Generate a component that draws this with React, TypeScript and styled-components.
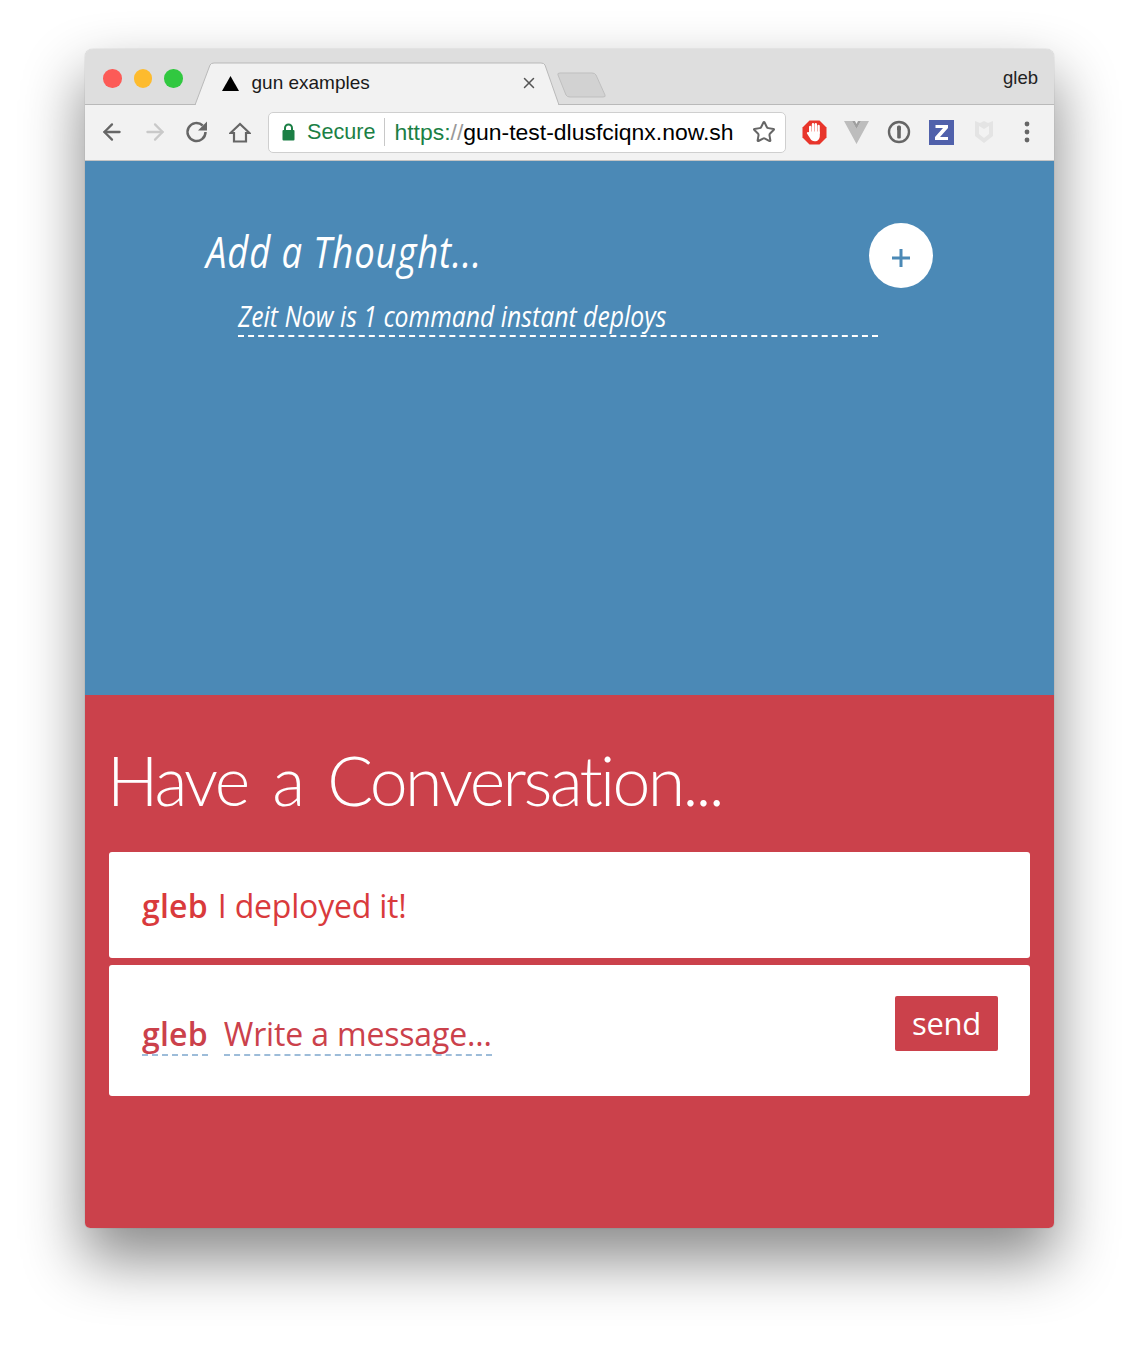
import { ArrowLeft, ArrowRight, Star, X } from "lucide-react"
import styled, { createGlobalStyle } from "styled-components"

const GlobalStyle = createGlobalStyle`
    html, body {
        margin: 0;
        padding: 0;
        background: #fff;
    }
`

const Page = styled.div`
    width: 1139px;
    height: 1350px;
    padding-top: 49px;
    box-sizing: border-box;
    overflow: hidden;
`

const BrowserWindow = styled.div`
    width: 969px;
    height: 1179px;
    margin-left: 85px;
    border-radius: 8px 8px 5px 5px;
    overflow: hidden;
    display: flex;
    flex-direction: column;
    box-shadow: 0 30px 60px 2px rgba(0, 0, 0, 0.46), 0 0 1px rgba(0, 0, 0, 0.4);
`

const TitleBar = styled.div`
    height: 56px;
    flex-shrink: 0;
    display: flex;
    align-items: flex-end;
    background: #dedede;
    border-bottom: 1px solid #b9b9b9;
    box-sizing: border-box;
    padding-left: 18px;
    font-family: "Liberation Sans", Arial, sans-serif;
`

const Lights = styled.div`
    display: flex;
    gap: 12px;
    align-self: flex-start;
    margin-top: 20px;
    margin-right: 11px;
`

const Light = styled.span<{ $color: string }>`
    width: 18.5px;
    height: 18.5px;
    border-radius: 50%;
    background: ${p => p.$color};
`

const Tab = styled.div`
    position: relative;
    width: 366px;
    height: 43px;
    margin-bottom: -1px;
    display: flex;
    align-items: center;
    padding: 0 22px 1px 28px;
    box-sizing: border-box;
    font-size: 19px;
    color: #1a1a1a;
`

const TabShape = styled.svg`
    position: absolute;
    left: 0;
    top: 0;
`

const TabFavicon = styled.svg`
    position: relative;
    margin-right: 13px;
`

const TabTitle = styled.span`
    position: relative;
    flex: 1;
`

const TabClose = styled(X)`
    position: relative;
    color: #555;
`

const NewTab = styled.svg`
    margin-left: -3px;
    margin-bottom: 5px;
`

const Profile = styled.span`
    margin-left: auto;
    margin-right: 16px;
    align-self: center;
    font-size: 18.5px;
    color: #222;
    padding-top: 2px;
`

const Toolbar = styled.div`
    height: 56px;
    flex-shrink: 0;
    display: flex;
    align-items: center;
    background: #f2f2f2;
    border-bottom: 1px solid #c4c4c4;
    box-sizing: border-box;
    padding: 0 0 1px 6px;
`

const ToolButton = styled.span<{ $color?: string }>`
    width: 42.5px;
    height: 40px;
    flex-shrink: 0;
    display: flex;
    align-items: center;
    justify-content: center;
    color: ${p => p.$color || "#666"};
`

const Omnibox = styled.div`
    width: 518px;
    height: 41px;
    margin-left: 7px;
    margin-right: 7px;
    display: flex;
    align-items: center;
    box-sizing: border-box;
    padding: 0 9px 0 13px;
    background: #fff;
    border: 1px solid #cfcfcf;
    border-radius: 5px;
    font-family: "Liberation Sans", Arial, sans-serif;
`

const Secure = styled.span`
    color: #1b7f45;
    font-size: 21.6px;
    margin-left: 12px;
    padding-right: 9px;
    border-right: 1px solid #c8c8c8;
    line-height: 28px;
`

const Url = styled.span`
    margin-left: 9px;
    flex: 1;
    color: #000;
    font-size: 22.95px;
    white-space: nowrap;
`

const UrlScheme = styled.span`
    color: #1b7f45;
`

const UrlSlashes = styled.span`
    color: #999;
`

const ThoughtPanel = styled.section`
    height: 534px;
    flex-shrink: 0;
    box-sizing: border-box;
    background: #4b89b6;
    padding: 62px 121px 0;
    color: #fff;
`

const ThoughtHeader = styled.div`
    display: flex;
    justify-content: space-between;
    align-items: flex-start;
`

const ThoughtTitle = styled.h2`
    margin: -1px 0 0;
    font-family: "Open Sans", sans-serif;
    font-style: italic;
    font-weight: 400;
    font-size: 44px;
    line-height: 58px;
    letter-spacing: 1px;
    transform: scaleX(0.83);
    transform-origin: left center;
    white-space: nowrap;
`

const AddButton = styled.button`
    width: 64px;
    height: 65px;
    padding: 0;
    border: 0;
    border-radius: 50%;
    background: #fff;
    color: #4b89b6;
    display: flex;
    align-items: center;
    justify-content: center;
    padding-top: 5px;
`

const ThoughtInput = styled.div`
    width: 640px;
    height: 50px;
    margin-top: -1px;
    margin-left: 32px;
    box-sizing: border-box;
    border-bottom: 2px dashed #fff;
    font-family: "Open Sans", sans-serif;
    font-style: italic;
    font-size: 30px;
    font-weight: 400;
    line-height: 58px;
`

const InputText = styled.span`
    display: inline-block;
    transform: scaleX(0.826);
    transform-origin: left center;
    white-space: nowrap;
`

const ChatPanel = styled.section`
    flex: 1;
    box-sizing: border-box;
    background: #cb414b;
    padding: 0 24px;
    display: flex;
    flex-direction: column;
    gap: 7px;
`

const ChatTitle = styled.h1`
    margin: 37px 0 0 -2px;
    height: 113px;
    font-family: Lato, sans-serif;
    font-weight: 300;
    font-size: 68px;
    line-height: 95px;
    color: #fff;
    letter-spacing: -2.7px;
    word-spacing: 9px;
    white-space: nowrap;
`

const Card = styled.div<{ $height: number }>`
    height: ${p => p.$height}px;
    box-sizing: border-box;
    background: #fff;
    border-radius: 3px;
    display: flex;
    padding: 0 32px 0 33px;
    font-family: "Open Sans", sans-serif;
    font-size: 32px;
    color: #d93a3c;
`

const MessageLine = styled.div`
    margin-top: 31px;
    line-height: 46px;
    display: flex;
    gap: 10px;
    letter-spacing: -0.2px;
`

const Author = styled.strong`
    font-weight: 600;
    letter-spacing: 0.2px;
`

const ComposeField = styled.div<{ $gap?: boolean }>`
    align-self: flex-start;
    margin-top: 47px;
    margin-right: ${p => (p.$gap ? 16 : 0)}px;
    height: 42px;
    line-height: 44px;
    border-bottom: 2px dashed #9dbcd9;
    color: #cb414b;
    font-weight: ${p => (p.$gap ? 600 : 400)};
    letter-spacing: ${p => (p.$gap ? 0.2 : -0.17)}px;
    white-space: nowrap;
`

const SendButton = styled.button`
    margin-left: auto;
    margin-top: 31px;
    width: 103px;
    height: 55px;
    border: 0;
    border-radius: 2px;
    background: #cb414b;
    color: #fff;
    font-family: "Open Sans", sans-serif;
    font-size: 31px;
    letter-spacing: -0.3px;
    padding: 0 0 1px;
`

const ExtensionIcon = styled.svg`
    display: block;
`

export default function App() {
    return (
        <Page>
            <GlobalStyle />
            <BrowserWindow>
                <TitleBar>
                    <Lights>
                        <Light $color="#fc5b57" />
                        <Light $color="#fdbb2e" />
                        <Light $color="#31c840" />
                    </Lights>
                    <Tab>
                        <TabShape width="366" height="43" viewBox="0 0 366 43">
                            <path d="M1 43 L16 3 Q17 1 20 1 L347 1 Q350 1 351 3 L365 43 Z" fill="#f2f2f2" stroke="#b9b9b9" strokeWidth="1" />
                            <rect x="2" y="42" width="362" height="2" fill="#f2f2f2" />
                        </TabShape>
                        <TabFavicon width="17" height="15" viewBox="0 0 17 15">
                            <path d="M8.5 0 L17 15 L0 15 Z" fill="#000" />
                        </TabFavicon>
                        <TabTitle>gun examples</TabTitle>
                        <TabClose size={18} strokeWidth={2} />
                    </Tab>
                    <NewTab width="52" height="28" viewBox="0 0 52 28">
                        <path d="M3 2 L35 2 Q38 2 39 4 L48 24 Q49 26 46 26 L13 26 Q10 26 9 24 L1 4 Q0 2 3 2 Z" fill="#d2d2d2" stroke="#bfbfbf" />
                    </NewTab>
                    <Profile>gleb</Profile>
                </TitleBar>
                <Toolbar>
                    <ToolButton><ArrowLeft size={26} strokeWidth={2.1} /></ToolButton>
                    <ToolButton $color="#c9c9c9"><ArrowRight size={26} strokeWidth={2.1} /></ToolButton>
                    <ToolButton>
                        <ExtensionIcon width="24" height="24" viewBox="0 0 24 24">
                            <path d="M20.5 12a9 9 0 1 1-2.8-6.5" fill="none" stroke="#666" strokeWidth="2.5" />
                            <path d="M22 1.5V10.5H13Z" fill="#666" />
                        </ExtensionIcon>
                    </ToolButton>
                    <ToolButton>
                        <ExtensionIcon width="22" height="21" viewBox="0 0 22 21">
                            <path d="M11 2L1.5 11H5V19.5H17V11H20.5Z" fill="none" stroke="#666" strokeWidth="2.2" strokeLinejoin="miter" />
                        </ExtensionIcon>
                    </ToolButton>
                    <Omnibox>
                        <svg width="13" height="18" viewBox="0 0 13 18">
                            <path d="M3 8V5a3.5 3.5 0 0 1 7 0v3" fill="none" stroke="#1b7f45" strokeWidth="2" />
                            <rect x="0.5" y="7" width="12" height="10.5" rx="1" fill="#1b7f45" />
                        </svg>
                        <Secure>Secure</Secure>
                        <Url>
                            <UrlScheme>https:</UrlScheme>
                            <UrlSlashes>//</UrlSlashes>
                            gun-test-dlusfciqnx.now.sh
                        </Url>
                        <Star size={24} strokeWidth={2} color="#666" />
                    </Omnibox>
                    <ToolButton>
                        <ExtensionIcon width="25" height="25" viewBox="0 0 25 25">
                            <path d="M7.5 0.5H17.5L24.5 7.5V17.5L17.5 24.5H7.5L0.5 17.5V7.5Z" fill="#e8352b" />
                            <path d="M8.2 13V7M11 12V4.2M13.8 12V4.2M16.6 13V6" stroke="#fff" strokeWidth="2.4" strokeLinecap="round" />
                            <path d="M7 11.5H17.8V16c0 3-2 5.3-5 5.3-2.4 0-3.6-1.1-4.6-2.8L5 13.6c-.7-1.3 1-2.3 2-1.2Z" fill="#fff" />
                        </ExtensionIcon>
                    </ToolButton>
                    <ToolButton>
                        <ExtensionIcon width="25" height="23" viewBox="0 0 25 23">
                            <path d="M0 0H8L12.5 8L17 0H25L12.5 23Z" fill="#bdbdbd" />
                            <path d="M8 0H11L12.5 3L14 0H17L12.5 8Z" fill="#9f9f9f" />
                        </ExtensionIcon>
                    </ToolButton>
                    <ToolButton>
                        <ExtensionIcon width="24" height="24" viewBox="0 0 24 24">
                            <circle cx="12" cy="12" r="10" fill="none" stroke="#666" strokeWidth="2.4" />
                            <rect x="10" y="5.5" width="4" height="5.5" rx="1.5" fill="#666" />
                            <rect x="10.2" y="10" width="3.6" height="8.5" rx="1" fill="#666" />
                        </ExtensionIcon>
                    </ToolButton>
                    <ToolButton>
                        <ExtensionIcon width="25" height="25" viewBox="0 0 25 25">
                            <rect width="25" height="25" fill="#5061ab" />
                            <path d="M6.5 5H19V8L11 17H19V20H6V17L14 8H6.5Z" fill="#fff" />
                        </ExtensionIcon>
                    </ToolButton>
                    <ToolButton>
                        <ExtensionIcon width="18" height="24" viewBox="0 0 18 24">
                            <path d="M0 1L5 3L9 1L13 3L18 1V16L9 23L0 16Z" fill="#e4e4e4" />
                            <path d="M4 6L9 9L14 6V14L9 18L4 14Z" fill="#f2f2f2" />
                        </ExtensionIcon>
                    </ToolButton>
                    <ToolButton>
                        <ExtensionIcon width="6" height="22" viewBox="0 0 6 22">
                            <circle cx="3" cy="3" r="2.4" fill="#666" />
                            <circle cx="3" cy="11" r="2.4" fill="#666" />
                            <circle cx="3" cy="19" r="2.4" fill="#666" />
                        </ExtensionIcon>
                    </ToolButton>
                </Toolbar>
                <ThoughtPanel>
                    <ThoughtHeader>
                        <ThoughtTitle>Add a Thought...</ThoughtTitle>
                        <AddButton aria-label="add">
                            <svg width="20" height="20" viewBox="0 0 20 20">
                                <path d="M10 1V19M1 10H19" stroke="currentColor" strokeWidth="3" />
                            </svg>
                        </AddButton>
                    </ThoughtHeader>
                    <ThoughtInput>
                        <InputText>Zeit Now is 1 command instant deploys</InputText>
                    </ThoughtInput>
                </ThoughtPanel>
                <ChatPanel>
                    <ChatTitle>Have a Conversation...</ChatTitle>
                    <Card $height={106}>
                        <MessageLine>
                            <Author>gleb</Author>
                            <span>I deployed it!</span>
                        </MessageLine>
                    </Card>
                    <Card $height={131}>
                        <ComposeField $gap>gleb</ComposeField>
                        <ComposeField>Write a message...</ComposeField>
                        <SendButton>send</SendButton>
                    </Card>
                </ChatPanel>
            </BrowserWindow>
        </Page>
    )
}
